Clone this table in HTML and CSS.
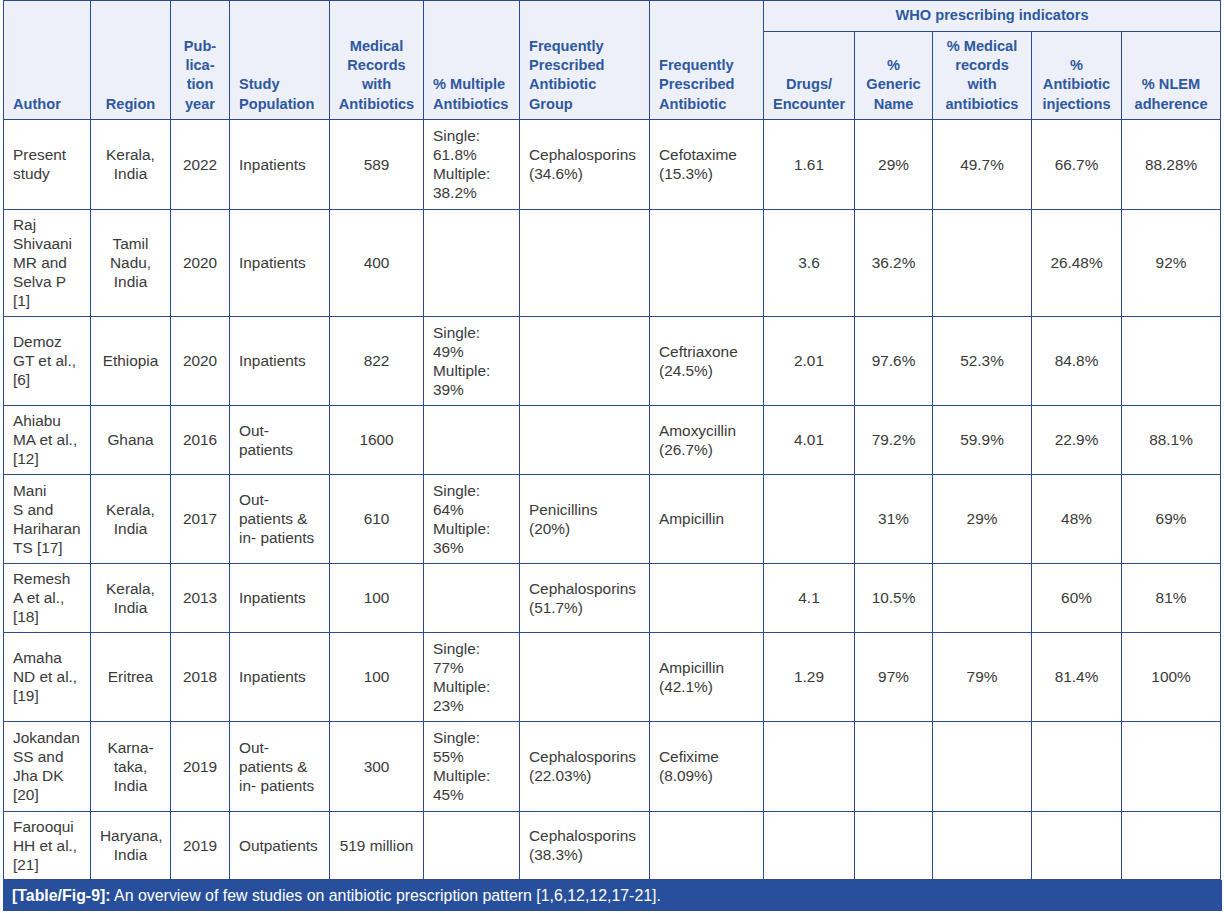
FILE: index.html
```html
<!DOCTYPE html>
<html>
<head>
<meta charset="utf-8">
<link rel="stylesheet" href="styles.css">
</head>
<body>
<div class="figure">
<table class="tbl">
<colgroup>
<col class="c-author"><col class="c-region"><col class="c-year"><col class="c-pop"><col class="c-rec"><col class="c-mult"><col class="c-group"><col class="c-anti"><col class="c-drugs"><col class="c-gen"><col class="c-medrec"><col class="c-inj"><col class="c-nlem">
</colgroup>
<thead>
<tr class="h1">
<th rowspan="2" class="l">Author</th>
<th rowspan="2">Region</th>
<th rowspan="2">Pub-<br>lica-<br>tion<br>year</th>
<th rowspan="2" class="l">Study<br>Population</th>
<th rowspan="2">Medical<br>Records<br>with<br>Antibiotics</th>
<th rowspan="2" class="l">% Multiple<br>Antibiotics</th>
<th rowspan="2" class="l">Frequently<br>Prescribed<br>Antibiotic<br>Group</th>
<th rowspan="2" class="l">Frequently<br>Prescribed<br>Antibiotic</th>
<th colspan="5" class="who">WHO prescribing indicators</th>
</tr>
<tr class="h2">
<th>Drugs/<br>Encounter</th>
<th>%<br>Generic<br>Name</th>
<th>% Medical<br>records<br>with<br>antibiotics</th>
<th>%<br>Antibiotic<br>injections</th>
<th>% NLEM<br>adherence</th>
</tr>
</thead>
<tbody>
<tr class="r4">
<td class="l">Present<br>study</td><td>Kerala,<br>India</td><td>2022</td><td class="l">Inpatients</td><td>589</td>
<td class="l">Single:<br>61.8%<br>Multiple:<br>38.2%</td><td class="l">Cephalosporins<br>(34.6%)</td><td class="l">Cefotaxime<br>(15.3%)</td>
<td>1.61</td><td>29%</td><td>49.7%</td><td>66.7%</td><td>88.28%</td>
</tr>
<tr class="r5">
<td class="l">Raj<br>Shivaani<br>MR and<br>Selva P<br>[1]</td><td>Tamil<br>Nadu,<br>India</td><td>2020</td><td class="l">Inpatients</td><td>400</td>
<td class="l"></td><td class="l"></td><td class="l"></td>
<td>3.6</td><td>36.2%</td><td></td><td>26.48%</td><td>92%</td>
</tr>
<tr class="r4">
<td class="l">Demoz<br>GT et al.,<br>[6]</td><td>Ethiopia</td><td>2020</td><td class="l">Inpatients</td><td>822</td>
<td class="l">Single:<br>49%<br>Multiple:<br>39%</td><td class="l"></td><td class="l">Ceftriaxone<br>(24.5%)</td>
<td>2.01</td><td>97.6%</td><td>52.3%</td><td>84.8%</td><td></td>
</tr>
<tr class="r3">
<td class="l">Ahiabu<br>MA et al.,<br>[12]</td><td>Ghana</td><td>2016</td><td class="l">Out-<br>patients</td><td>1600</td>
<td class="l"></td><td class="l"></td><td class="l">Amoxycillin<br>(26.7%)</td>
<td>4.01</td><td>79.2%</td><td>59.9%</td><td>22.9%</td><td>88.1%</td>
</tr>
<tr class="r4">
<td class="l">Mani<br>S and<br>Hariharan<br>TS [17]</td><td>Kerala,<br>India</td><td>2017</td><td class="l">Out-<br>patients &amp;<br>in- patients</td><td>610</td>
<td class="l">Single:<br>64%<br>Multiple:<br>36%</td><td class="l">Penicillins<br>(20%)</td><td class="l">Ampicillin</td>
<td></td><td>31%</td><td>29%</td><td>48%</td><td>69%</td>
</tr>
<tr class="r3">
<td class="l">Remesh<br>A et al.,<br>[18]</td><td>Kerala,<br>India</td><td>2013</td><td class="l">Inpatients</td><td>100</td>
<td class="l"></td><td class="l">Cephalosporins<br>(51.7%)</td><td class="l"></td>
<td>4.1</td><td>10.5%</td><td></td><td>60%</td><td>81%</td>
</tr>
<tr class="r4">
<td class="l">Amaha<br>ND et al.,<br>[19]</td><td>Eritrea</td><td>2018</td><td class="l">Inpatients</td><td>100</td>
<td class="l">Single:<br>77%<br>Multiple:<br>23%</td><td class="l"></td><td class="l">Ampicillin<br>(42.1%)</td>
<td>1.29</td><td>97%</td><td>79%</td><td>81.4%</td><td>100%</td>
</tr>
<tr class="r4">
<td class="l">Jokandan<br>SS and<br>Jha DK<br>[20]</td><td>Karna-<br>taka,<br>India</td><td>2019</td><td class="l">Out-<br>patients &amp;<br>in- patients</td><td>300</td>
<td class="l">Single:<br>55%<br>Multiple:<br>45%</td><td class="l">Cephalosporins<br>(22.03%)</td><td class="l">Cefixime<br>(8.09%)</td>
<td></td><td></td><td></td><td></td><td></td>
</tr>
<tr class="r3">
<td class="l">Farooqui<br>HH et al.,<br>[21]</td><td>Haryana,<br>India</td><td>2019</td><td class="l">Outpatients</td><td>519 million</td>
<td class="l"></td><td class="l">Cephalosporins<br>(38.3%)</td><td class="l"></td>
<td></td><td></td><td></td><td></td><td></td>
</tr>
</tbody>
</table>
<div class="caption"><b>[Table/Fig-9]:</b> An overview of few studies on antibiotic prescription pattern [1,6,12,12,17-21].</div>
</div>
</body>
</html>
```
FILE: styles.css
```css
html, body {
  margin: 0;
  padding: 0;
  background: #ffffff;
}
.figure {
  margin-left: 3px;
  width: 1219px;
  font-family: "Liberation Sans", Arial, sans-serif;
}
.tbl {
  border-collapse: collapse;
  table-layout: fixed;
  width: 1218px;
  font-size: 15.4px;
  line-height: 19px;
  color: #3a3a3a;
}
.c-author { width: 87px; }
.c-region { width: 80px; }
.c-year { width: 59px; }
.c-pop { width: 100px; }
.c-rec { width: 94px; }
.c-mult { width: 96px; }
.c-group { width: 130px; }
.c-anti { width: 114px; }
.c-drugs { width: 91px; }
.c-gen { width: 78px; }
.c-medrec { width: 99px; }
.c-inj { width: 90px; }
.c-nlem { width: 99px; }

.tbl th, .tbl td {
  border: 1px solid #2c4b88;
  padding: 4px 9px;
  text-align: center;
}
.tbl th {
  background: #edf0f8;
  color: #2f58a0;
  font-weight: bold;
  font-size: 14.6px;
  line-height: 19.3px;
  vertical-align: bottom;
  padding: 4px 4px 5px;
}
.tbl th.l {
  text-align: left;
  padding-left: 9px;
}
.tbl th.who {
  vertical-align: middle;
  height: 22px;
  padding: 4px;
}
.tbl .h2 th {
  height: 78px;
}
.tbl td {
  vertical-align: middle;
}
.tbl td.l {
  text-align: left;
}
.r3 { height: 68.5px; }
.r4 { height: 89.5px; }
.r5 { height: 107px; }

.caption {
  background: #284f9b;
  color: #ffffff;
  font-size: 15.9px;
  line-height: 31px;
  height: 31px;
  padding-left: 9px;
}
.caption b {
  font-weight: bold;
}
```
